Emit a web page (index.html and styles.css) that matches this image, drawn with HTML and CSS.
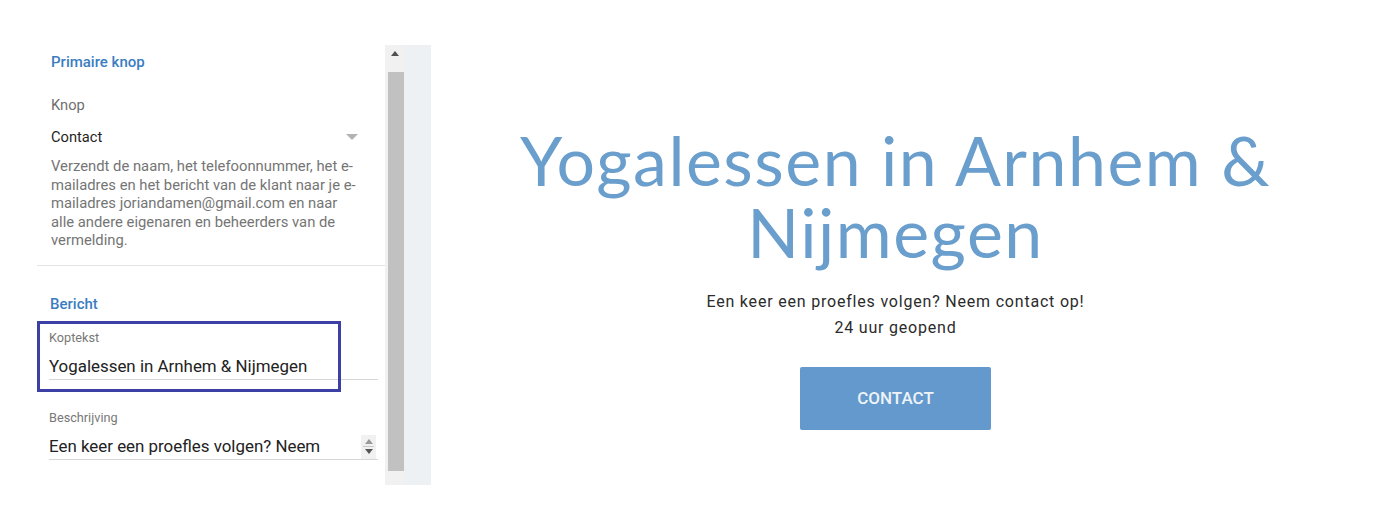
FILE: index.html
```html
<!DOCTYPE html>
<html>
<head>
<meta charset="utf-8">
<link rel="stylesheet" href="styles.css">
</head>
<body>
<div class="page">
  <aside class="sidebar">
    <div class="panel">
      <section class="sec sec-button">
        <h3 class="sec-title">Primaire knop</h3>
        <div class="field-label">Knop</div>
        <div class="select">
          <span class="select-value">Contact</span>
          <span class="select-caret"></span>
        </div>
        <p class="desc">Verzendt de naam, het telefoonnummer, het e-mailadres en het bericht van de klant naar je e-mailadres joriandamen@gmail.com en naar alle andere eigenaren en beheerders van de vermelding.</p>
      </section>
      <section class="sec sec-msg">
        <h3 class="sec-title msg-title">Bericht</h3>
        <div class="input-wrap">
          <div class="input">
            <div class="input-label">Koptekst</div>
            <div class="input-value">Yogalessen in Arnhem &amp; Nijmegen</div>
          </div>
          <div class="highlight"></div>
        </div>
        <div class="input input-2">
          <div class="input-label">Beschrijving</div>
          <div class="input-value">Een keer een proefles volgen? Neem
            <span class="spinner"><span class="sp-up"></span><span class="sp-line"></span><span class="sp-down"></span></span>
          </div>
        </div>
      </section>
    </div>
    <div class="scrollbar">
      <div class="sb-arrow"></div>
      <div class="sb-thumb"></div>
    </div>
    <div class="gutter"></div>
  </aside>
  <main class="preview">
    <h1 class="hero-title"><span class="hero-line">Yogalessen in Arnhem &amp;</span><span class="hero-line">Nijmegen</span></h1>
    <p class="hero-sub">Een keer een proefles volgen? Neem contact op!<br>24 uur geopend</p>
    <button class="hero-btn">CONTACT</button>
  </main>
</div>
</body>
</html>
```
FILE: styles.css
```css
* { box-sizing: border-box; }
html, body { margin: 0; padding: 0; background: #fff; }
body { font-family: Roboto, "Liberation Sans", sans-serif; }
.page { display: flex; width: 1388px; height: 530px; }

.sidebar {
  display: flex;
  margin-left: 37px;
  margin-top: 45px;
  height: 440px;
}
.panel { width: 348px; height: 440px; overflow: hidden; }

.sec-button { padding: 7px 0 15px 14px; border-bottom: 1px solid #e3e3e3; }
.sec-title {
  margin: 0;
  font-size: 15px;
  line-height: 20px;
  font-weight: 500;
  color: #3b7dc0;
}
.field-label {
  margin-top: 23px;
  font-size: 14.7px;
  line-height: 20px;
  color: #6f6f6f;
}
.select {
  display: flex;
  justify-content: space-between;
  align-items: center;
  margin-top: 12px;
  width: 307px;
  height: 20px;
}
.select-value { font-size: 14.7px; line-height: 20px; color: #1f1f1f; }
.select-caret {
  width: 0; height: 0;
  border-left: 6px solid transparent;
  border-right: 6px solid transparent;
  border-top: 6px solid #b3b3b3;
}
.desc {
  margin: 10px 0 0;
  width: 308px;
  font-size: 14.8px;
  line-height: 18.5px;
  color: #757575;
}

.sec-msg { padding-top: 28px; }
.msg-title { padding-left: 13px; }
.input-wrap { position: relative; margin-top: 7px; }
.input {
  margin-left: 12px;
  width: 329px;
  border-bottom: 1px solid #d6d6d6;
  padding-top: 9px;
}
.input-label { font-size: 12.7px; line-height: 16px; color: #777; }
.input-value {
  position: relative;
  margin-top: 8px;
  font-size: 16.9px;
  line-height: 24px;
  color: #222;
  padding-bottom: 1px;
}
.input-2 { margin-top: 22px; padding-top: 8px; }
.highlight {
  position: absolute;
  left: 0; top: 0;
  width: 304px; height: 71px;
  border: 3px solid #3c3fa3;
  pointer-events: none;
}
.spinner {
  position: absolute;
  right: 2px; top: 1px;
  width: 15px; height: 24px;
  background: #f1f1f1;
  display: flex; flex-direction: column; align-items: center; justify-content: center;
  gap: 2px;
}
.sp-up { width: 0; height: 0; border-left: 4px solid transparent; border-right: 4px solid transparent; border-bottom: 5px solid #9a9a9a; }
.sp-down { width: 0; height: 0; border-left: 4px solid transparent; border-right: 4px solid transparent; border-top: 5px solid #555; }
.sp-line { width: 11px; height: 1px; background: #c8c8c8; }

.scrollbar {
  width: 19px;
  height: 440px;
  background: #f1f1f1;
  display: flex; flex-direction: column; align-items: flex-end;
}
.sb-arrow {
  align-self: center;
  margin-top: 6px;
  width: 0; height: 0;
  border-left: 4px solid transparent;
  border-right: 4px solid transparent;
  border-bottom: 5px solid #505050;
}
.sb-thumb {
  margin-top: 16px;
  width: 16px;
  height: 399px;
  background: #c1c1c1;
}
.gutter { width: 27px; height: 440px; background: #eef1f3; }

.preview {
  width: 929px;
  display: flex; flex-direction: column; align-items: center;
  padding-top: 124px;
}
.hero-title {
  margin: 0;
  display: flex; flex-direction: column; align-items: center;
  text-align: center;
  font-family: "Lato", sans-serif;
  font-weight: 400;
  font-size: 68px;
  line-height: 72px;
  color: #6a9ecc;
  letter-spacing: 1.5px;
}
.hero-line { display: block; }
.hero-sub {
  margin: 21px 0 0;
  text-align: center;
  font-family: "Roboto", sans-serif;
  font-size: 16px;
  line-height: 26px;
  color: #2b2b2b;
  letter-spacing: 0.8px;
}
.hero-btn {
  margin-top: 26px;
  width: 191px; height: 63px;
  border: 0; border-radius: 2px;
  background: #6399cc;
  color: #eef3f8;
  font-family: Roboto, sans-serif;
  font-weight: 500;
  font-size: 17px;
  padding-bottom: 2px;
}
```
